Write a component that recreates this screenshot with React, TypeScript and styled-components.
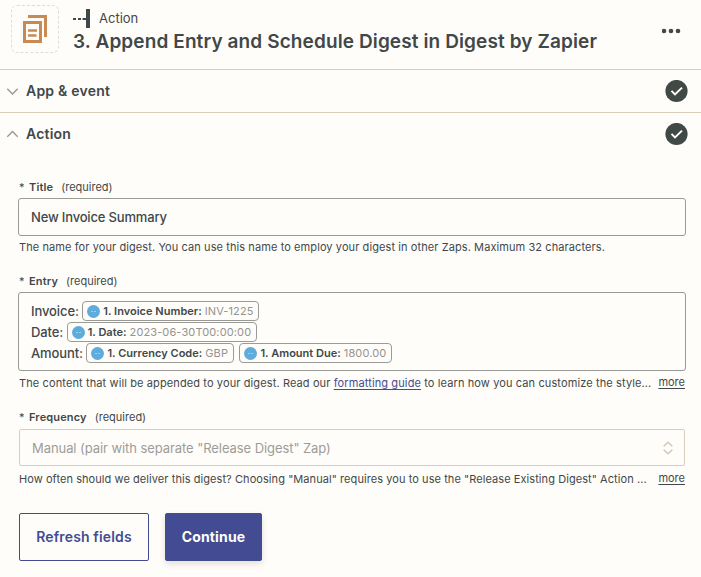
import React from "react";
import styled, { createGlobalStyle } from "styled-components";

const ink = "#41484a";
const indigo = "#434c93";
const sand = "#dacdbc";
const grey = "#9a9a97";

const GlobalStyle = createGlobalStyle`
  *, *::before, *::after { box-sizing: border-box; }
  body {
    margin: 0;
    background: #fffdf9;
    color: ${ink};
    font-family: Inter, "Liberation Sans", sans-serif;
  }
`;

const Page = styled.main`
  display: flex;
  flex-direction: column;
  width: 701px;
  height: 577px;
  overflow: hidden;
`;

const Header = styled.header`
  display: flex;
  align-items: flex-start;
  height: 70px;
  padding: 5px 20px 0 11px;
  border-bottom: 1px solid ${sand};
`;

const AppTile = styled.div`
  display: flex;
  width: 48px;
  height: 48px;
  border: 1px dashed #dcdfd8;
  border-radius: 6px;
`;

const Heading = styled.div`
  flex: 1;
  padding: 3px 0 0 14px;
`;

const Kind = styled.div`
  display: flex;
  align-items: center;
  gap: 9px;
  height: 21px;
  font-size: 13px;
  line-height: 21px;
`;

const StepTitle = styled.h1`
  margin: 0;
  font-size: 19px;
  font-weight: 600;
  line-height: 25px;
  letter-spacing: 0.11px;
  white-space: nowrap;
`;

const MenuButton = styled.button`
  display: flex;
  margin: 23px 0 0;
  padding: 0;
  border: 0;
  background: none;
`;

const SectionBar = styled.div<{ $ruled?: boolean }>`
  display: flex;
  align-items: center;
  height: 43px;
  padding: 0 13px 0 6px;
  border-bottom: 1px solid ${(p) => (p.$ruled ? sand : "transparent")};
`;

const SectionName = styled.h2`
  flex: 1;
  margin: 0 0 0 7px;
  font-size: 14px;
  font-weight: 600;
  line-height: 20px;
  letter-spacing: 0.22px;
`;

const Form = styled.div`
  display: flex;
  flex-direction: column;
  padding: 23px 15px 0 18px;
`;

const Field = styled.section<{ $height: number }>`
  height: ${(p) => p.$height}px;
`;

const Label = styled.div`
  display: flex;
  height: 19px;
  padding-left: 1px;
  font-size: 11px;
  line-height: 16px;
`;

const Star = styled.span`
  width: 10px;
`;

const LabelName = styled.span`
  margin-right: 8px;
  font-weight: 600;
  letter-spacing: 0.15px;
`;

const TextBox = styled.div`
  width: 668px;
  height: 38px;
  padding-left: 12px;
  border: 1px solid ${grey};
  border-radius: 3px;
  font-size: 13px;
  font-weight: 500;
  line-height: 36px;
  letter-spacing: -0.17px;
`;

const EntryBox = styled.div`
  width: 668px;
  height: 79px;
  padding: 8px 0 0 12px;
  border: 1px solid ${grey};
  border-radius: 3px;
`;

const EntryLine = styled.div`
  display: flex;
  align-items: flex-start;
  height: 21px;
  gap: 5px;
  font-size: 13px;
  font-weight: 500;
  line-height: 21px;
  letter-spacing: -0.1px;
`;

const EntryKey = styled.span`
  margin-right: -1.5px;
`;

const Pill = styled.span<{ $width: number }>`
  display: flex;
  align-items: center;
  width: ${(p) => p.$width}px;
  height: 20px;
  padding-left: 4px;
  border: 1px solid ${grey};
  border-radius: 4px;
  font-size: 11px;
  line-height: 18px;
  white-space: nowrap;
`;

const PillName = styled.span`
  margin: 0 3px;
  font-weight: 600;
  letter-spacing: 0.02px;
`;

const PillValue = styled.span`
  color: #949491;
  font-weight: 400;
  letter-spacing: 0.12px;
`;

const SelectBox = styled.div`
  display: flex;
  align-items: center;
  justify-content: space-between;
  width: 666px;
  height: 37px;
  margin: 1px 0 0 1px;
  padding: 0 11px 0 12px;
  border: 1px solid ${sand};
  border-radius: 2px;
  color: #9d9c98;
  font-size: 13px;
  letter-spacing: -0.07px;
`;

const Help = styled.div<{ $gap?: number; $tracking?: number }>`
  display: flex;
  justify-content: space-between;
  width: 667px;
  margin-top: ${(p) => p.$gap ?? 3}px;
  padding-left: 1px;
  font-size: 11px;
  line-height: 18px;
  letter-spacing: ${(p) => p.$tracking ?? 0.09}px;
  white-space: nowrap;
`;

const GuideLink = styled.a`
  color: ${indigo};
  text-decoration: underline;
  text-underline-offset: 2px;
`;

const More = styled.a`
  letter-spacing: 0;
  line-height: 16px;
  text-decoration: underline;
  text-underline-offset: 2px;
`;

const Actions = styled.div`
  display: flex;
  gap: 16px;
  padding-left: 1px;
`;

const Button = styled.button<{ $primary?: boolean }>`
  width: ${(p) => (p.$primary ? 97 : 130)}px;
  height: 48px;
  padding: 0 0 2px;
  border: 1px solid ${indigo};
  border-radius: 2px;
  background: ${(p) => (p.$primary ? indigo : "transparent")};
  box-shadow: ${(p) => (p.$primary ? "0 3px 6px rgba(80, 70, 50, 0.16)" : "none")};
  color: ${(p) => (p.$primary ? "#fffdf9" : indigo)};
  font-family: inherit;
  font-size: 14px;
  font-weight: ${(p) => (p.$primary ? 700 : 600)};
  letter-spacing: 0.14px;
`;

const DigestIcon = () => (
  <svg width="46" height="46" viewBox="0 0 46 46" fill="none" stroke="#c98953">
    <path d="M16 10.500H33.500V31" strokeWidth="3" />
    <rect x="12.500" y="16.500" width="16" height="19" strokeWidth="3" />
    <path d="M16 24.400H25M16 29.500H24.500" strokeWidth="2.500" />
  </svg>
);

const StepIcon = () => (
  <svg width="17" height="19" viewBox="0 0 17 19" fill={ink}>
    <path d="M0 9h3v2H0zM5 9h3v2H5zM9.500 9H13V0h4v19h-4v-8H9.500z" />
  </svg>
);

const Chevron = ({ up }: { up?: boolean }) => (
  <svg width="13" height="10" viewBox="0 0 13 10" fill="none" stroke="#969692" strokeWidth="1.300">
    <path d={up ? "M1.300 7.700 6.500 2.500 11.700 7.700" : "M1.300 2.800 6.500 8 11.700 2.800"} />
  </svg>
);

const Check = () => (
  <svg width="23" height="23" viewBox="0 0 23 23" fill="none">
    <circle cx="11.500" cy="11" r="11.100" fill="#414946" />
    <path d="M6.500 10.900 10 14.400 17 7.600" stroke="#fffdf9" strokeWidth="2" />
  </svg>
);

const Dots = () => (
  <svg width="19" height="6" viewBox="0 0 19 6" fill="#414946">
    <circle cx="2" cy="3" r="2.300" />
    <circle cx="9" cy="3" r="2.300" />
    <circle cx="16" cy="3" r="2.300" />
  </svg>
);

const SourceIcon = () => (
  <svg width="13" height="13" viewBox="0 0 13 13">
    <circle cx="6.500" cy="6.500" r="6.500" fill="#5eacdc" />
    <path d="M4.500 6h1v1h-1zM7.500 6h1v1h-1z" fill="#e3f1f8" />
  </svg>
);

const Stepper = () => (
  <svg width="10" height="14" viewBox="0 0 10 14" fill="none" stroke="#d3c7b7" strokeWidth="1.500">
    <path d="M.7 5.200 5 1.200 9.300 5.200M.7 8.800 5 12.800 9.300 8.800" />
  </svg>
);

const FieldLabel = ({ name }: { name: string }) => (
  <Label>
    <Star>*</Star>
    <LabelName>{name}</LabelName>
    <span>(required)</span>
  </Label>
);

const Token = ({ name, value, width }: { name: string; value: string; width: number }) => (
  <Pill $width={width}>
    <SourceIcon />
    <PillName>{name}</PillName>
    <PillValue>{value}</PillValue>
  </Pill>
);

export default function App() {
  return (
    <Page>
      <GlobalStyle />
      <Header>
        <AppTile>
          <DigestIcon />
        </AppTile>
        <Heading>
          <Kind>
            <StepIcon />
            Action
          </Kind>
          <StepTitle>3. Append Entry and Schedule Digest in Digest by Zapier</StepTitle>
        </Heading>
        <MenuButton aria-label="More options">
          <Dots />
        </MenuButton>
      </Header>
      <SectionBar $ruled>
        <Chevron />
        <SectionName>App &amp; event</SectionName>
        <Check />
      </SectionBar>
      <SectionBar>
        <Chevron up />
        <SectionName>Action</SectionName>
        <Check />
      </SectionBar>
      <Form>
        <Field $height={94}>
          <FieldLabel name="Title" />
          <TextBox>New Invoice Summary</TextBox>
          <Help $gap={2}>
            The name for your digest. You can use this name to employ your digest in other Zaps. Maximum 32 characters.
          </Help>
        </Field>
        <Field $height={136}>
          <FieldLabel name="Entry" />
          <EntryBox>
            <EntryLine>
              <EntryKey>Invoice:</EntryKey>
              <Token name="1. Invoice Number:" value="INV-1225" width={177} />
            </EntryLine>
            <EntryLine>
              <EntryKey>Date:</EntryKey>
              <Token name="1. Date:" value="2023-06-30T00:00:00" width={190} />
            </EntryLine>
            <EntryLine>
              <EntryKey>Amount:</EntryKey>
              <Token name="1. Currency Code:" value="GBP" width={148} />
              <Token name="1. Amount Due:" value="1800.00" width={153} />
            </EntryLine>
          </EntryBox>
          <Help $tracking={0.115}>
            <span>
              The content that will be appended to your digest. Read our <GuideLink>formatting guide</GuideLink> to learn
              how you can customize the style...
            </span>
            <More>more</More>
          </Help>
        </Field>
        <Field $height={104}>
          <FieldLabel name="Frequency" />
          <SelectBox>
            Manual (pair with separate "Release Digest" Zap)
            <Stepper />
          </SelectBox>
          <Help $gap={4} $tracking={0.07}>
            <span>
              How often should we deliver this digest? Choosing "Manual" requires you to use the "Release Existing Digest"
              Action ...
            </span>
            <More>more</More>
          </Help>
        </Field>
        <Actions>
          <Button>Refresh fields</Button>
          <Button $primary>Continue</Button>
        </Actions>
      </Form>
    </Page>
  );
}
